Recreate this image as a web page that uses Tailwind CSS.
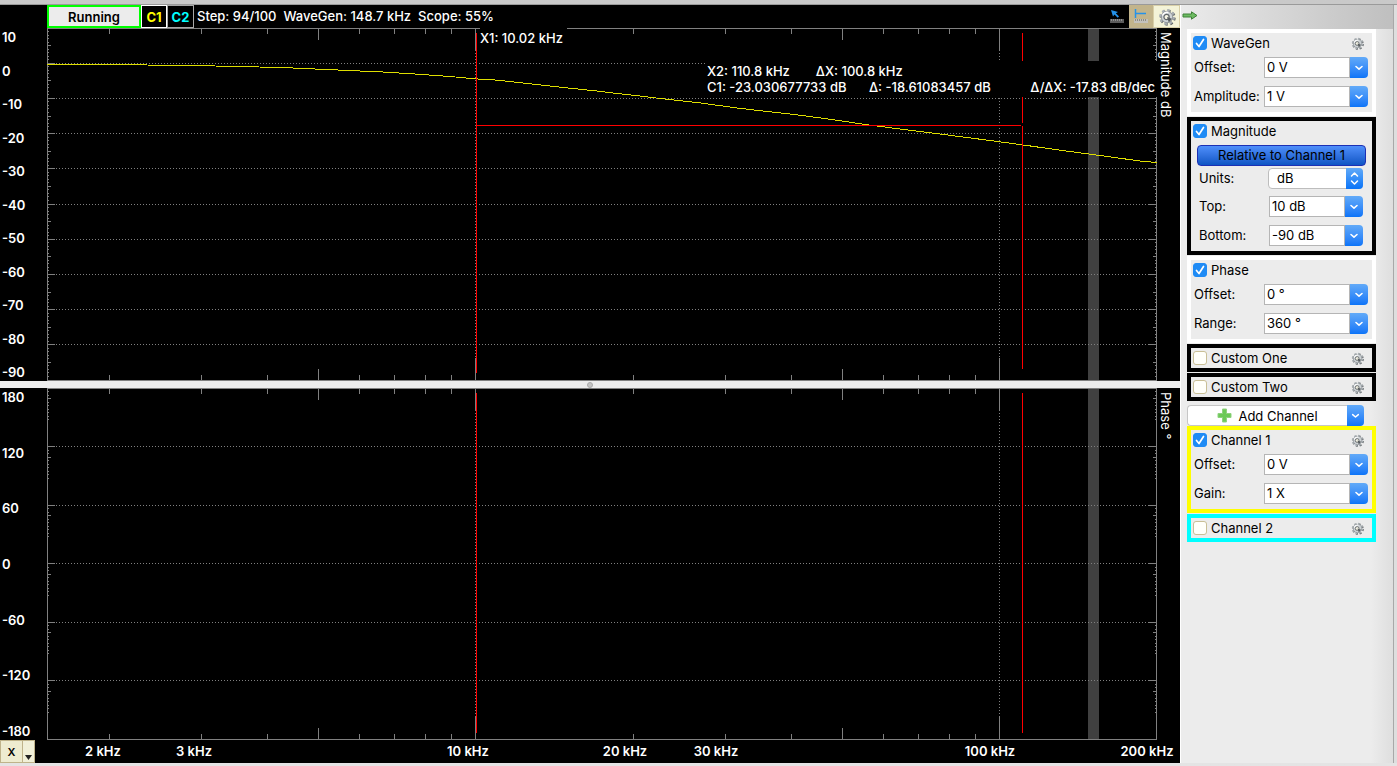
<!DOCTYPE html>
<html lang="en">
<head>
<meta charset="utf-8">
<meta name="viewport" content="width=device-width, initial-scale=1">
<title>Network Analyzer</title>
<script src="https://cdn.jsdelivr.net/npm/@tailwindcss/browser@4"></script>
</head>
<body class="flex h-screen flex-col overflow-hidden bg-linear-to-b from-[#c9c9c9] to-[#e4e4e4] font-['Inter',sans-serif] text-[13px] leading-[18px] text-black">
<svg class="hidden" aria-hidden="true">
  <symbol id="gear" viewBox="0 0 20 20">
    <circle cx="10.800" cy="10.800" r="7.300" fill="none" stroke="#5f6467" stroke-width="3.200" stroke-dasharray="2.900 2.830"/>
    <circle cx="10" cy="10" r="7.300" fill="none" stroke="#a9afb3" stroke-width="3" stroke-dasharray="2.900 2.830"/>
    <circle cx="10" cy="10" r="6.300" fill="#cfd4d7" stroke="#8d9397" stroke-width="1"/>
    <path d="M5 8.500a5.200 5.200 0 0 1 6.500-3.500" fill="none" stroke="#fff" stroke-width="1.600"/>
    <circle cx="9.500" cy="10" r="2.900" fill="#f7f6e6" stroke="#62676a" stroke-width="1.400"/>
    <path d="M10 10l5.500 2-3.500 4z" fill="#565b5e"/>
  </symbol>
  <symbol id="down" viewBox="0 0 18 21"><path d="M6 9.500l3 2.600 3-2.600" fill="none" stroke="#fff" stroke-width="1.600" stroke-linecap="round" stroke-linejoin="round"/></symbol>
  <symbol id="tick" viewBox="0 0 14 14"><path d="M3.500 7.500l2.500 3L10.500 3.500" fill="none" stroke="#fff" stroke-width="1.700" stroke-linecap="round" stroke-linejoin="round"/></symbol>
</svg>

<main class="mt-[4px] mb-[3px] flex min-h-0 flex-1 border-t border-[#9a9a9a]">
  <section class="flex min-w-0 flex-1 flex-col bg-black text-white">
    <header class="flex h-[23px] items-stretch pl-[47px] font-semibold">
      <button class="w-[94px] border-2 border-[#00ff00] bg-[#ececec] text-black">Running</button>
      <button class="w-[26px] border border-white font-bold text-[#ffff00]">C1</button>
      <button class="w-[27px] border border-[#a8a8a8] font-bold text-[#00ffff]">C2</button>
      <p class="ml-[3px] flex flex-1 items-center gap-[7px] pb-px font-medium whitespace-nowrap"><span>Step: 94/100</span><span>WaveGen: 148.7 kHz</span><span>Scope: 55%</span></p>
      <button class="flex w-[24px] items-center justify-center" aria-label="Cursor measure">
        <svg class="h-[15px] w-[16px]" viewBox="0 0 16 15"><path d="M2 1l7 2-2.200 1.300L10 7.500 8.700 8.800 5.500 5.500 4 7.500z" fill="#2492ea"/><path d="M1 10h14v4H1z" fill="#5c5c5c"/><path d="M2.500 10v2M4.500 10v2M6.500 10v2M8.500 10v2M10.500 10v2M12.500 10v2" stroke="#8e8e8e"/></svg>
      </button>
      <button class="flex w-[24px] items-center justify-center bg-[#c2b48b]" aria-label="Horizontal ruler">
        <svg class="h-[15px] w-[16px]" viewBox="0 0 16 15"><path d="M2.500 0v9M3 4.500h10" fill="none" stroke="#2492ea" stroke-width="1.500"/><path d="M1 10h14v4H1z" fill="#c4c2bc"/><path d="M2.500 10v2M4.500 10v2M6.500 10v2M8.500 10v2M10.500 10v2M12.500 10v2" stroke="#8f8c82"/></svg>
      </button>
      <button class="flex w-[27px] items-center justify-center border border-[#d8cfa8] bg-[#f4f3d8]" aria-label="Settings"><svg class="size-[18px]"><use href="#gear"/></svg></button>
    </header>

    <div class="flex min-h-0 flex-[353_1_0%]">
      <div class="flex w-[47px] flex-col justify-between pl-[2px] font-semibold">
        <span>10</span><span>0</span><span>-10</span><span>-20</span><span>-30</span><span>-40</span><span>-50</span><span>-60</span><span>-70</span><span>-80</span><span>-90</span>
      </div>
      <div class="relative min-w-0 flex-1">
        <svg id="mag" class="absolute inset-0 h-full w-full" viewBox="0 0 1110 353" preserveAspectRatio="none" shape-rendering="crispEdges"></svg>
        <p class="absolute top-0 left-[39%] bg-black pt-px pr-1 font-medium whitespace-nowrap">X1: 10.02 kHz</p>
        <div class="absolute top-[33px] right-0 flex h-[36px] w-[452px] flex-col bg-black pt-[2px] pr-[2px] pl-[2px] leading-[16px] font-medium whitespace-nowrap">
          <p class="flex gap-[26px]"><span>X2: 110.8 kHz</span><span>ΔX: 100.8 kHz</span></p>
          <p class="flex"><span class="w-[162px]">C1: -23.030677733 dB</span><span>Δ: -18.61083457 dB</span><span class="ml-auto">Δ/ΔX: -17.83 dB/dec</span></p>
        </div>
      </div>
      <div class="w-[23px] pt-[4px] pr-[6px] leading-[16px] [writing-mode:vertical-rl]">Magnitude dB</div>
    </div>

    <div class="flex h-[7px] items-center justify-center bg-[#ececec]" role="separator"><span class="size-[6px] rounded-full border border-[#a9a9a9] bg-[#c4c4c4]"></span></div>

    <div class="flex min-h-0 flex-[352_1_0%]">
      <div class="flex w-[47px] flex-col justify-between pl-[2px] font-semibold">
        <span>180</span><span>120</span><span>60</span><span>0</span><span>-60</span><span>-120</span><span>-180</span>
      </div>
      <div class="relative min-w-0 flex-1">
        <svg id="phase" class="absolute inset-0 h-full w-full" viewBox="0 0 1110 352" preserveAspectRatio="none" shape-rendering="crispEdges"></svg>
      </div>
      <div class="w-[23px] pt-[4px] pr-[6px] leading-[16px] [writing-mode:vertical-rl]">Phase °</div>
    </div>

    <footer class="flex h-[23px] font-semibold">
      <div class="flex w-[47px] text-black">
        <button class="w-[23px] border border-[#bfb38a] bg-[#eeecd0] text-[11px]">X</button>
        <button class="flex w-[12px] items-end justify-center border border-l-0 border-[#bfb38a] bg-[#f1f0d8] pb-[2px]" aria-label="Axis menu"><svg class="h-[5px] w-[7px]" viewBox="0 0 7 5"><path d="M0 0h7L3.500 5z" fill="#222"/></svg></button>
      </div>
      <div id="xlabels" class="relative flex-1"></div>
      <div class="w-[23px]"></div>
    </footer>
  </section>

  <aside class="flex w-[217px] shrink-0 bg-[#dedede]">
    <div class="mr-[3px] flex min-w-0 flex-1 flex-col border-r border-l border-r-[#a8a8a8] border-l-white bg-[linear-gradient(90deg,#ececec_0,#ececec_190px,#dedede_212px)]">
      <div class="flex h-[24px] items-center bg-linear-to-r from-[#ebebeb] to-[#bfbfbf] pb-[3px] pl-[1px]">
        <button aria-label="Hide panel"><svg class="h-[9px] w-[16px]" viewBox="0 0 16 9"><path d="M1 3h8.500V.8L15 4.500 9.500 8.200V6H1z" fill="#6dbb62" stroke="#3e8138" stroke-width="1"/></svg></button>
      </div>
      <form class="ml-[6px] flex w-[189px] flex-col gap-px">
        <fieldset class="min-w-0 border-4 border-white bg-[#ececec] pr-[4px] pb-[5px] pl-[3px]">
          <div class="-ml-px flex h-[20px] items-center"><label class="flex flex-1 items-center gap-1"><span class="grid size-[14px]"><input type="checkbox" checked class="peer col-start-1 row-start-1 size-[14px] appearance-none rounded-[3px] border border-[#c9bf96] bg-[#fffffa] checked:border-[#1f8bf5] checked:bg-[#1f8bf5]"><svg class="pointer-events-none invisible col-start-1 row-start-1 size-[14px] peer-checked:visible"><use href="#tick"/></svg></span>WaveGen</label><button type="button" aria-label="WaveGen settings" class="mr-[4px] flex"><svg class="size-[13px]"><use href="#gear"/></svg></button></div>
          <div class="mt-[4px] flex h-[21px] items-center"><label for="wo" class="w-[70px] shrink-0 pb-[2px]">Offset:</label><input id="wo" value="0 V" class="h-full w-0 flex-1 border border-[#b5b5b5] bg-white px-[2px] pb-[2px]"><button type="button" aria-label="Offset list" class="h-full w-[18px] rounded-r-[4px] bg-linear-to-b from-[#62aaf8] to-[#0a74f8]"><svg class="h-[21px] w-[18px]"><use href="#down"/></svg></button></div>
          <div class="mt-[8px] flex h-[21px] items-center"><label for="wa" class="w-[70px] shrink-0 pb-[2px]">Amplitude:</label><input id="wa" value="1 V" class="h-full w-0 flex-1 border border-[#b5b5b5] bg-white px-[2px] pb-[2px]"><button type="button" aria-label="Amplitude list" class="h-full w-[18px] rounded-r-[4px] bg-linear-to-b from-[#62aaf8] to-[#0a74f8]"><svg class="h-[21px] w-[18px]"><use href="#down"/></svg></button></div>
        </fieldset>

        <fieldset class="min-w-0 border-4 border-black bg-[#ececec] pr-[9px] pb-[5px] pl-[8px]">
          <div class="-ml-[6px] flex h-[20px] items-center"><label class="flex flex-1 items-center gap-1"><span class="grid size-[14px]"><input type="checkbox" checked class="peer col-start-1 row-start-1 size-[14px] appearance-none rounded-[3px] border border-[#c9bf96] bg-[#fffffa] checked:border-[#1f8bf5] checked:bg-[#1f8bf5]"><svg class="pointer-events-none invisible col-start-1 row-start-1 size-[14px] peer-checked:visible"><use href="#tick"/></svg></span>Magnitude</label></div>
          <button type="button" class="mt-[4px] -ml-[2px] block h-[21px] w-[169px] rounded-[4px] border border-[#1c30b4] bg-linear-to-b from-[#4f8ffb] to-[#0d55c4] leading-[19px]">Relative to Channel 1</button>
          <div class="mt-[2px] flex h-[21px] items-center"><label for="mu" class="w-[69px] shrink-0 pb-[2px]">Units:</label><div class="relative flex h-full flex-1"><select id="mu" class="h-full w-full appearance-none rounded-[4px] border border-[#bdbdbd] bg-white px-[8px] pb-[2px]"><option>dB</option></select><svg class="pointer-events-none absolute inset-y-0 right-0 h-[21px] w-[17px]" viewBox="0 0 17 21"><defs><linearGradient id="blue" x2="0" y2="1"><stop stop-color="#62aaf8"/><stop offset="1" stop-color="#0a74f8"/></linearGradient></defs><path d="M0 0h13a4 4 0 0 1 4 4v13a4 4 0 0 1-4 4H0z" fill="url(#blue)"/><path d="M5.500 8l3-3 3 3M5.500 13l3 3 3-3" fill="none" stroke="#fff" stroke-width="1.500" stroke-linecap="round" stroke-linejoin="round"/></svg></div></div>
          <div class="mt-[7px] flex h-[21px] items-center"><label for="mt" class="w-[70px] shrink-0 pb-[2px]">Top:</label><input id="mt" value="10 dB" class="h-full w-0 flex-1 border border-[#b5b5b5] bg-white px-[2px] pb-[2px]"><button type="button" aria-label="Top list" class="h-full w-[18px] rounded-r-[4px] bg-linear-to-b from-[#62aaf8] to-[#0a74f8]"><svg class="h-[21px] w-[18px]"><use href="#down"/></svg></button></div>
          <div class="mt-[8px] flex h-[21px] items-center"><label for="mb" class="w-[70px] shrink-0 pb-[2px]">Bottom:</label><input id="mb" value="-90 dB" class="h-full w-0 flex-1 border border-[#b5b5b5] bg-white px-[2px] pb-[2px]"><button type="button" aria-label="Bottom list" class="h-full w-[18px] rounded-r-[4px] bg-linear-to-b from-[#62aaf8] to-[#0a74f8]"><svg class="h-[21px] w-[18px]"><use href="#down"/></svg></button></div>
        </fieldset>

        <fieldset class="min-w-0 border-4 border-white bg-[#ececec] pr-[4px] pb-[5px] pl-[3px]">
          <div class="-ml-px flex h-[20px] items-center"><label class="flex flex-1 items-center gap-1"><span class="grid size-[14px]"><input type="checkbox" checked class="peer col-start-1 row-start-1 size-[14px] appearance-none rounded-[3px] border border-[#c9bf96] bg-[#fffffa] checked:border-[#1f8bf5] checked:bg-[#1f8bf5]"><svg class="pointer-events-none invisible col-start-1 row-start-1 size-[14px] peer-checked:visible"><use href="#tick"/></svg></span>Phase</label></div>
          <div class="mt-[4px] flex h-[21px] items-center"><label for="po" class="w-[70px] shrink-0 pb-[2px]">Offset:</label><input id="po" value="0 °" class="h-full w-0 flex-1 border border-[#b5b5b5] bg-white px-[2px] pb-[2px]"><button type="button" aria-label="Phase offset list" class="h-full w-[18px] rounded-r-[4px] bg-linear-to-b from-[#62aaf8] to-[#0a74f8]"><svg class="h-[21px] w-[18px]"><use href="#down"/></svg></button></div>
          <div class="mt-[8px] flex h-[21px] items-center"><label for="pr" class="w-[70px] shrink-0 pb-[2px]">Range:</label><input id="pr" value="360 °" class="h-full w-0 flex-1 border border-[#b5b5b5] bg-white px-[2px] pb-[2px]"><button type="button" aria-label="Range list" class="h-full w-[18px] rounded-r-[4px] bg-linear-to-b from-[#62aaf8] to-[#0a74f8]"><svg class="h-[21px] w-[18px]"><use href="#down"/></svg></button></div>
        </fieldset>

        <fieldset class="min-w-0 border-4 border-black bg-[#ececec] pr-[4px] pl-[2px]">
          <div class="flex h-[20px] items-center"><label class="flex flex-1 items-center gap-1"><input type="checkbox" class="size-[14px] shrink-0 appearance-none rounded-[3px] border border-[#c9bf96] bg-[#fffffa] checked:bg-[#1f8bf5]">Custom One</label><button type="button" aria-label="Custom One settings" class="mr-[4px] flex"><svg class="size-[13px]"><use href="#gear"/></svg></button></div>
        </fieldset>
        <fieldset class="min-w-0 border-4 border-black bg-[#ececec] pr-[4px] pl-[2px]">
          <div class="flex h-[20px] items-center"><label class="flex flex-1 items-center gap-1"><input type="checkbox" class="size-[14px] shrink-0 appearance-none rounded-[3px] border border-[#c9bf96] bg-[#fffffa] checked:bg-[#1f8bf5]">Custom Two</label><button type="button" aria-label="Custom Two settings" class="mr-[4px] flex"><svg class="size-[13px]"><use href="#gear"/></svg></button></div>
        </fieldset>

        <div class="mt-[3px] -mb-px flex h-[21px] w-[177px]">
          <button type="button" class="flex flex-1 items-center justify-center gap-[6px] rounded-l-[4px] border border-r-0 border-[#c6c6c6] bg-white"><svg class="size-[15px]" viewBox="0 0 15 15"><path d="M5.500 1h4v4.500H14v4H9.500V14h-4V9.500H1v-4h4.500z" fill="#6cc957" stroke="#8fd27f"/></svg>Add Channel</button>
          <button type="button" aria-label="Channel list" class="w-[17px] rounded-r-[4px] bg-linear-to-b from-[#62aaf8] to-[#0a74f8]"><svg class="h-[21px] w-[17px]"><use href="#down"/></svg></button>
        </div>

        <fieldset class="min-w-0 border-4 border-[#ffff00] bg-[#ececec] pr-[4px] pb-[5px] pl-[3px]">
          <div class="-ml-px flex h-[20px] items-center"><label class="flex flex-1 items-center gap-1"><span class="grid size-[14px]"><input type="checkbox" checked class="peer col-start-1 row-start-1 size-[14px] appearance-none rounded-[3px] border border-[#c9bf96] bg-[#fffffa] checked:border-[#1f8bf5] checked:bg-[#1f8bf5]"><svg class="pointer-events-none invisible col-start-1 row-start-1 size-[14px] peer-checked:visible"><use href="#tick"/></svg></span>Channel 1</label><button type="button" aria-label="Channel 1 settings" class="mr-[4px] flex"><svg class="size-[13px]"><use href="#gear"/></svg></button></div>
          <div class="mt-[4px] flex h-[21px] items-center"><label for="co" class="w-[70px] shrink-0 pb-[2px]">Offset:</label><input id="co" value="0 V" class="h-full w-0 flex-1 border border-[#b5b5b5] bg-white px-[2px] pb-[2px]"><button type="button" aria-label="Channel offset list" class="h-full w-[18px] rounded-r-[4px] bg-linear-to-b from-[#62aaf8] to-[#0a74f8]"><svg class="h-[21px] w-[18px]"><use href="#down"/></svg></button></div>
          <div class="mt-[8px] flex h-[21px] items-center"><label for="cg" class="w-[70px] shrink-0 pb-[2px]">Gain:</label><input id="cg" value="1 X" class="h-full w-0 flex-1 border border-[#b5b5b5] bg-white px-[2px] pb-[2px]"><button type="button" aria-label="Gain list" class="h-full w-[18px] rounded-r-[4px] bg-linear-to-b from-[#62aaf8] to-[#0a74f8]"><svg class="h-[21px] w-[18px]"><use href="#down"/></svg></button></div>
        </fieldset>
        <fieldset class="min-w-0 border-4 border-[#00ffff] bg-[#ececec] pr-[4px] pl-[2px]">
          <div class="flex h-[20px] items-center"><label class="flex flex-1 items-center gap-1"><input type="checkbox" class="size-[14px] shrink-0 appearance-none rounded-[3px] border border-[#c9bf96] bg-[#fffffa] checked:bg-[#1f8bf5]">Channel 2</label><button type="button" aria-label="Channel 2 settings" class="mr-[4px] flex"><svg class="size-[13px]"><use href="#gear"/></svg></button></div>
        </fieldset>
      </form>
    </div>
  </aside>
</main>

<script>
// Logarithmic frequency axis: pixel column of a frequency in kHz.
const X10 = 428.9, DECADE = 524;
const fx = k => Math.floor(X10 + DECADE * Math.log10(k / 10));
const rect = (x, y, w, h, c) => `<rect x="${x}" y="${y}" width="${w}" height="${h}" fill="${c}"/>`;
const G = '#808080';
const freqs = [2,3,4,5,6,7,8,9,10,20,30,40,50,60,70,80,90,100];

function frame(h, divisions, minors, medium) {
  const bottom = h - 1;
  let s = rect(1041, 1, 11, bottom - 1, '#404040');
  s += rect(0, 0, 1110, 1, G) + rect(0, bottom, 1110, 1, G) + rect(0, 0, 1, h, G) + rect(1109, 0, 1, h, G);
  for (const f of freqs) {
    const len = f === 10 || f === 100 ? 22 : f === 5 || f === 50 ? 11 : 5;
    s += rect(fx(f), 1, 1, len, G) + rect(fx(f), bottom - len, 1, len, G);
    if (len === 22) s += `<path d="M${fx(f) + .5} 25V${bottom - 22}" stroke="${G}" stroke-dasharray="1 2"/>`;
  }
  for (let i = 0; i < divisions; i++) {
    const y0 = bottom * i / divisions;
    if (i) {
      const y = Math.floor(y0);
      s += rect(1, y, 7, 1, G) + rect(1102, y, 7, 1, G);
      s += `<path d="M9 ${y + .5}H1102" stroke="${G}" stroke-dasharray="1 2"/>`;
    }
    for (const [k, d] of minors.entries()) {
      const w = k === medium ? 3 : 1, y = Math.floor(y0 + d);
      s += rect(1, y, w, 1, G) + rect(1109 - w, y, w, 1, G);
    }
  }
  return s;
}

const curve = [[47,64],[147,64.5],[215,65.5],[259,66.5],[293,67.5],[315,68.5],[338,69.5],[360,70.5],[383,71.5],[415,73.5],[450,76],[475,78.3],[495,79.5],[528,83],[563,87],[595,90.300],[617,93],[640,95.5],[663,98.300],[697,102],[741,108],[792,113.700],[832,119],[865,124],[904,129],[940,133.500],[990,140],[1022,144.300],[1055,149],[1085,153],[1100,155],[1140,160.500],[1157,162]]
  .map(([x, y]) => (x - 47) + ',' + (y - 27.5).toFixed(1)).join(' ');

const RED = '#ff0000';
document.getElementById('mag').innerHTML =
  frame(353, 10, [1,2,3,4,5,6,7,8,9].map(k => k * 3.52), 4) +
  `<polyline points="${curve}" fill="none" stroke="#dede00"/>` +
  rect(429, 5, 1, 340, RED) + rect(975, 5, 1, 90, RED) + rect(975, 98, 1, 243, RED) + rect(430, 97, 544, 1, RED);
document.getElementById('phase').innerHTML =
  frame(352, 6, [1,2,3,4,5,6,7,8,9].map(k => k * 3.5), 2) +
  rect(429, 5, 1, 340, RED) + rect(975, 5, 1, 340, RED);

document.getElementById('xlabels').innerHTML = [[56,'2 kHz'],[147,'3 kHz'],[421,'10 kHz'],[578,'20 kHz'],[669,'30 kHz'],[943,'100 kHz'],[1100,'200 kHz']]
  .map(([x, t]) => `<span class="absolute top-[2px] -translate-x-1/2 whitespace-nowrap" style="left:${x / 11.1}%">${t}</span>`).join('');
</script>
</body>
</html>
